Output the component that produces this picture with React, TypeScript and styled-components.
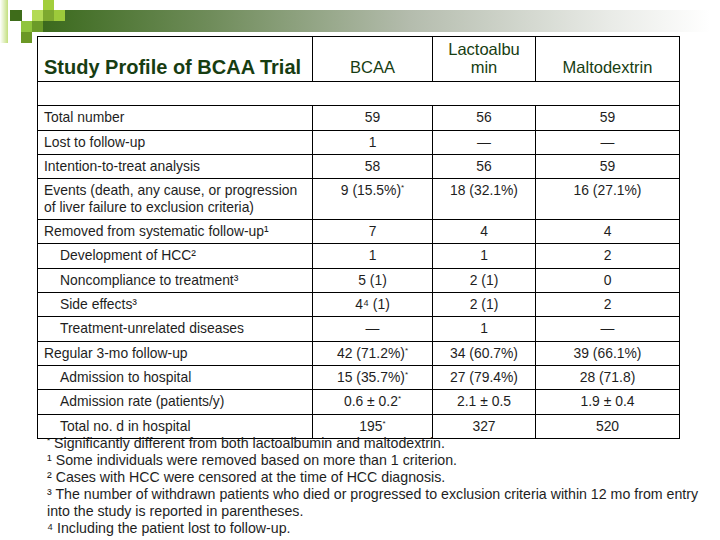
import React from 'react'
import styled, { createGlobalStyle } from 'styled-components'

const GlobalStyle = createGlobalStyle`
  html, body {
    margin: 0;
    padding: 0;
    background: #ffffff;
  }
  body {
    font-family: "Liberation Sans", Arial, sans-serif;
  }
`

const Slide = styled.div`
  width: 720px;
  height: 540px;
  overflow: hidden;
  background: #fff;
  color: #1e1e1e;
`

const BannerSvg = styled.svg`
  display: block;
  overflow: visible;
`

const Profile = styled.table`
  margin-left: 37px;
  width: 643px;
  border-collapse: collapse;
  table-layout: fixed;
`

const HeadRow = styled.tr`
  height: 45px;
`

const HeadCell = styled.th<{ $title?: boolean }>`
  border: 1px solid #000;
  padding: 0 6px 5px;
  vertical-align: bottom;
  text-align: ${(p) => (p.$title ? 'left' : 'center')};
  font-size: ${(p) => (p.$title ? '20px' : '16.5px')};
  font-weight: ${(p) => (p.$title ? 'bold' : 'normal')};
  line-height: 18px;
  color: #173d12;
  white-space: nowrap;
`

const Row = styled.tr<{ $tall?: boolean }>`
  height: ${(p) => (p.$tall ? '41px' : '24.3px')};
`

const Cell = styled.td<{ $indent?: boolean; $center?: boolean }>`
  border: 1px solid #000;
  padding: 3px 6px 0 ${(p) => (p.$indent ? '22px' : '6px')};
  vertical-align: top;
  text-align: ${(p) => (p.$center ? 'center' : 'left')};
  font-size: 13.9px;
  line-height: 17px;
  color: #1e1e1e;
`

const Mark = styled.sup`
  font-size: 8px;
  line-height: 0;
  vertical-align: 5px;
`

const Notes = styled.div`
  margin: -4px 0 0 47px;
  width: 652px;
`

const Note = styled.div`
  font-size: 14.2px;
  line-height: 17px;
  color: #1e1e1e;
`

type DataRow = {
  label: string
  indent?: boolean
  cells: React.ReactNode[]
  tall?: boolean
}

const Star = () => <Mark>*</Mark>

const rows: DataRow[] = [
  { label: 'Total number', cells: ['59', '56', '59'] },
  { label: 'Lost to follow-up', cells: ['1', '—', '—'] },
  { label: 'Intention-to-treat analysis', cells: ['58', '56', '59'] },
  {
    label: 'Events (death, any cause, or progression of liver failure to exclusion criteria)',
    cells: [<>9 (15.5%)<Star /></>, '18 (32.1%)', '16 (27.1%)'],
    tall: true,
  },
  { label: 'Removed from systematic follow-up¹', cells: ['7', '4', '4'] },
  { label: 'Development of HCC²', indent: true, cells: ['1', '1', '2'] },
  { label: 'Noncompliance to treatment³', indent: true, cells: ['5 (1)', '2 (1)', '0'] },
  { label: 'Side effects³', indent: true, cells: ['4⁴ (1)', '2 (1)', '2'] },
  { label: 'Treatment-unrelated diseases', indent: true, cells: ['—', '1', '—'] },
  { label: 'Regular 3-mo follow-up', cells: [<>42 (71.2%)<Star /></>, '34 (60.7%)', '39 (66.1%)'] },
  { label: 'Admission to hospital', indent: true, cells: [<>15 (35.7%)<Star /></>, '27 (79.4%)', '28 (71.8)'] },
  { label: 'Admission rate (patients/y)', indent: true, cells: [<>0.6 ± 0.2<Star /></>, '2.1 ± 0.5', '1.9 ± 0.4'] },
  { label: 'Total no. d in hospital', indent: true, cells: [<>195<Star /></>, '327', '520'] },
]

const notes: React.ReactNode[] = [
  <><Star /> Significantly different from both lactoalbumin and maltodextrin.</>,
  <>¹ Some individuals were removed based on more than 1 criterion.</>,
  <>² Cases with HCC were censored at the time of HCC diagnosis.</>,
  <>³ The number of withdrawn patients who died or progressed to exclusion criteria within 12 mo from entry into the study is reported in parentheses.</>,
  <>⁴ Including the patient lost to follow-up.</>,
]

const Banner = () => (
  <BannerSvg width="720" height="36" viewBox="0 0 720 36">
    <defs>
      <linearGradient id="bar" x1="0" y1="0" x2="1" y2="0">
        <stop offset="0" stopColor="#3b6a1d" />
        <stop offset="0.25" stopColor="#6f8c5a" />
        <stop offset="0.55" stopColor="#b4bcad" />
        <stop offset="0.85" stopColor="#e9ebe7" />
        <stop offset="1" stopColor="#ffffff" />
      </linearGradient>
      <linearGradient id="strip" x1="0" y1="0" x2="1" y2="0">
        <stop offset="0" stopColor="#ffffff" />
        <stop offset="1" stopColor="#c3df7e" />
      </linearGradient>
    </defs>
    <rect x="43" y="10" width="667" height="22" fill="url(#bar)" />
    <rect x="0" y="0" width="8" height="43" fill="url(#strip)" />
    <rect x="43" y="0" width="11" height="10" fill="#a2ce3c" />
    <rect x="10" y="10" width="12" height="11" fill="#3e6c1a" />
    <rect x="32" y="10" width="11" height="11" fill="#b3da55" />
    <rect x="43" y="10" width="11" height="11" fill="#7ea92f" />
    <rect x="54" y="10" width="11" height="11" fill="#9dca3b" />
    <rect x="21" y="21" width="11" height="11" fill="#90c43c" />
    <rect x="32" y="21" width="11" height="11" fill="#6b9b28" />
    <rect x="21" y="32" width="11" height="11" fill="#6b9825" />
  </BannerSvg>
)

export default function App() {
  return (
    <>
      <GlobalStyle />
      <Slide>
        <Banner />
        <Profile>
          <colgroup>
            <col style={{ width: 275 }} />
            <col style={{ width: 120 }} />
            <col style={{ width: 103 }} />
            <col style={{ width: 144 }} />
          </colgroup>
          <thead>
            <HeadRow>
              <HeadCell $title>Study Profile of BCAA Trial</HeadCell>
              <HeadCell>BCAA</HeadCell>
              <HeadCell>Lactoalbu<br />min</HeadCell>
              <HeadCell>Maltodextrin</HeadCell>
            </HeadRow>
          </thead>
          <tbody>
            <Row>
              <Cell colSpan={4} />
            </Row>
            {rows.map((r) => (
              <Row key={r.label} $tall={r.tall}>
                <Cell $indent={r.indent}>{r.label}</Cell>
                {r.cells.map((c, i) => (
                  <Cell key={i} $center>{c}</Cell>
                ))}
              </Row>
            ))}
          </tbody>
        </Profile>
        <Notes>
          {notes.map((n, i) => (
            <Note key={i}>{n}</Note>
          ))}
        </Notes>
      </Slide>
    </>
  )
}
